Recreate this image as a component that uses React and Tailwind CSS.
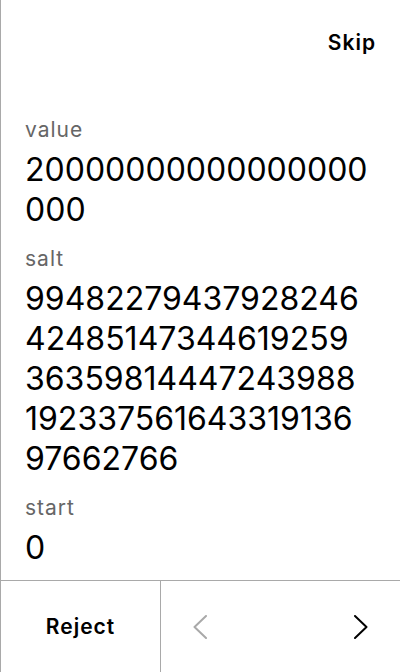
import React from "react";

// lines broken as in the source screen
const fields = [
  { label: "value", lines: ["20000000000000000", "000"] },
  {
    label: "salt",
    lines: [
      "99482279437928246",
      "42485147344619259",
      "36359814447243988",
      "192337561643319136",
      "97662766",
    ],
  },
  { label: "start", lines: ["0"] },
];

const Chevron = ({ dir, color }) => (
  <svg width="14" height="24" viewBox="0 0 14 24" fill="none">
    <path
      d={dir === "left" ? "M13 1 L1.5 12 L13 23" : "M1 1 L12.5 12 L1 23"}
      stroke={color}
      strokeWidth="2"
      strokeLinecap="round"
      strokeLinejoin="round"
    />
  </svg>
);

export default function App() {
  return (
    <div
      className="w-[400px] h-[672px] flex flex-col bg-white border-l border-[#a9a9a9] text-black"
      style={{ fontFamily: "Inter, 'Noto Sans', sans-serif" }}
    >
      <div className="h-[86px] flex items-center justify-end pr-6 shrink-0">
        <button className="text-[21px] font-semibold tracking-[1px] leading-7">Skip</button>
      </div>

      <div className="flex-1 px-6 pt-[30px] flex flex-col gap-[15px]">
        {fields.map((f) => (
          <div key={f.label} className="flex flex-col gap-[6px]">
            <div className="text-[21px] leading-7 tracking-[1px] text-[#666]">{f.label}</div>
            <div className="text-[32px] leading-10 whitespace-nowrap">
              {f.lines.map((l, i) => (
                <div key={i}>{l}</div>
              ))}
            </div>
          </div>
        ))}
      </div>

      <div className="h-[92px] shrink-0 flex border-t border-[#a9a9a9]">
        <button className="w-[160px] border-r border-[#a9a9a9] flex items-center justify-center text-[21px] font-semibold tracking-[1px]">
          Reject
        </button>
        <div className="flex-1 flex items-center justify-between px-8">
          <Chevron dir="left" color="#a9a9a9" />
          <Chevron dir="right" color="#000" />
        </div>
      </div>
    </div>
  );
}
